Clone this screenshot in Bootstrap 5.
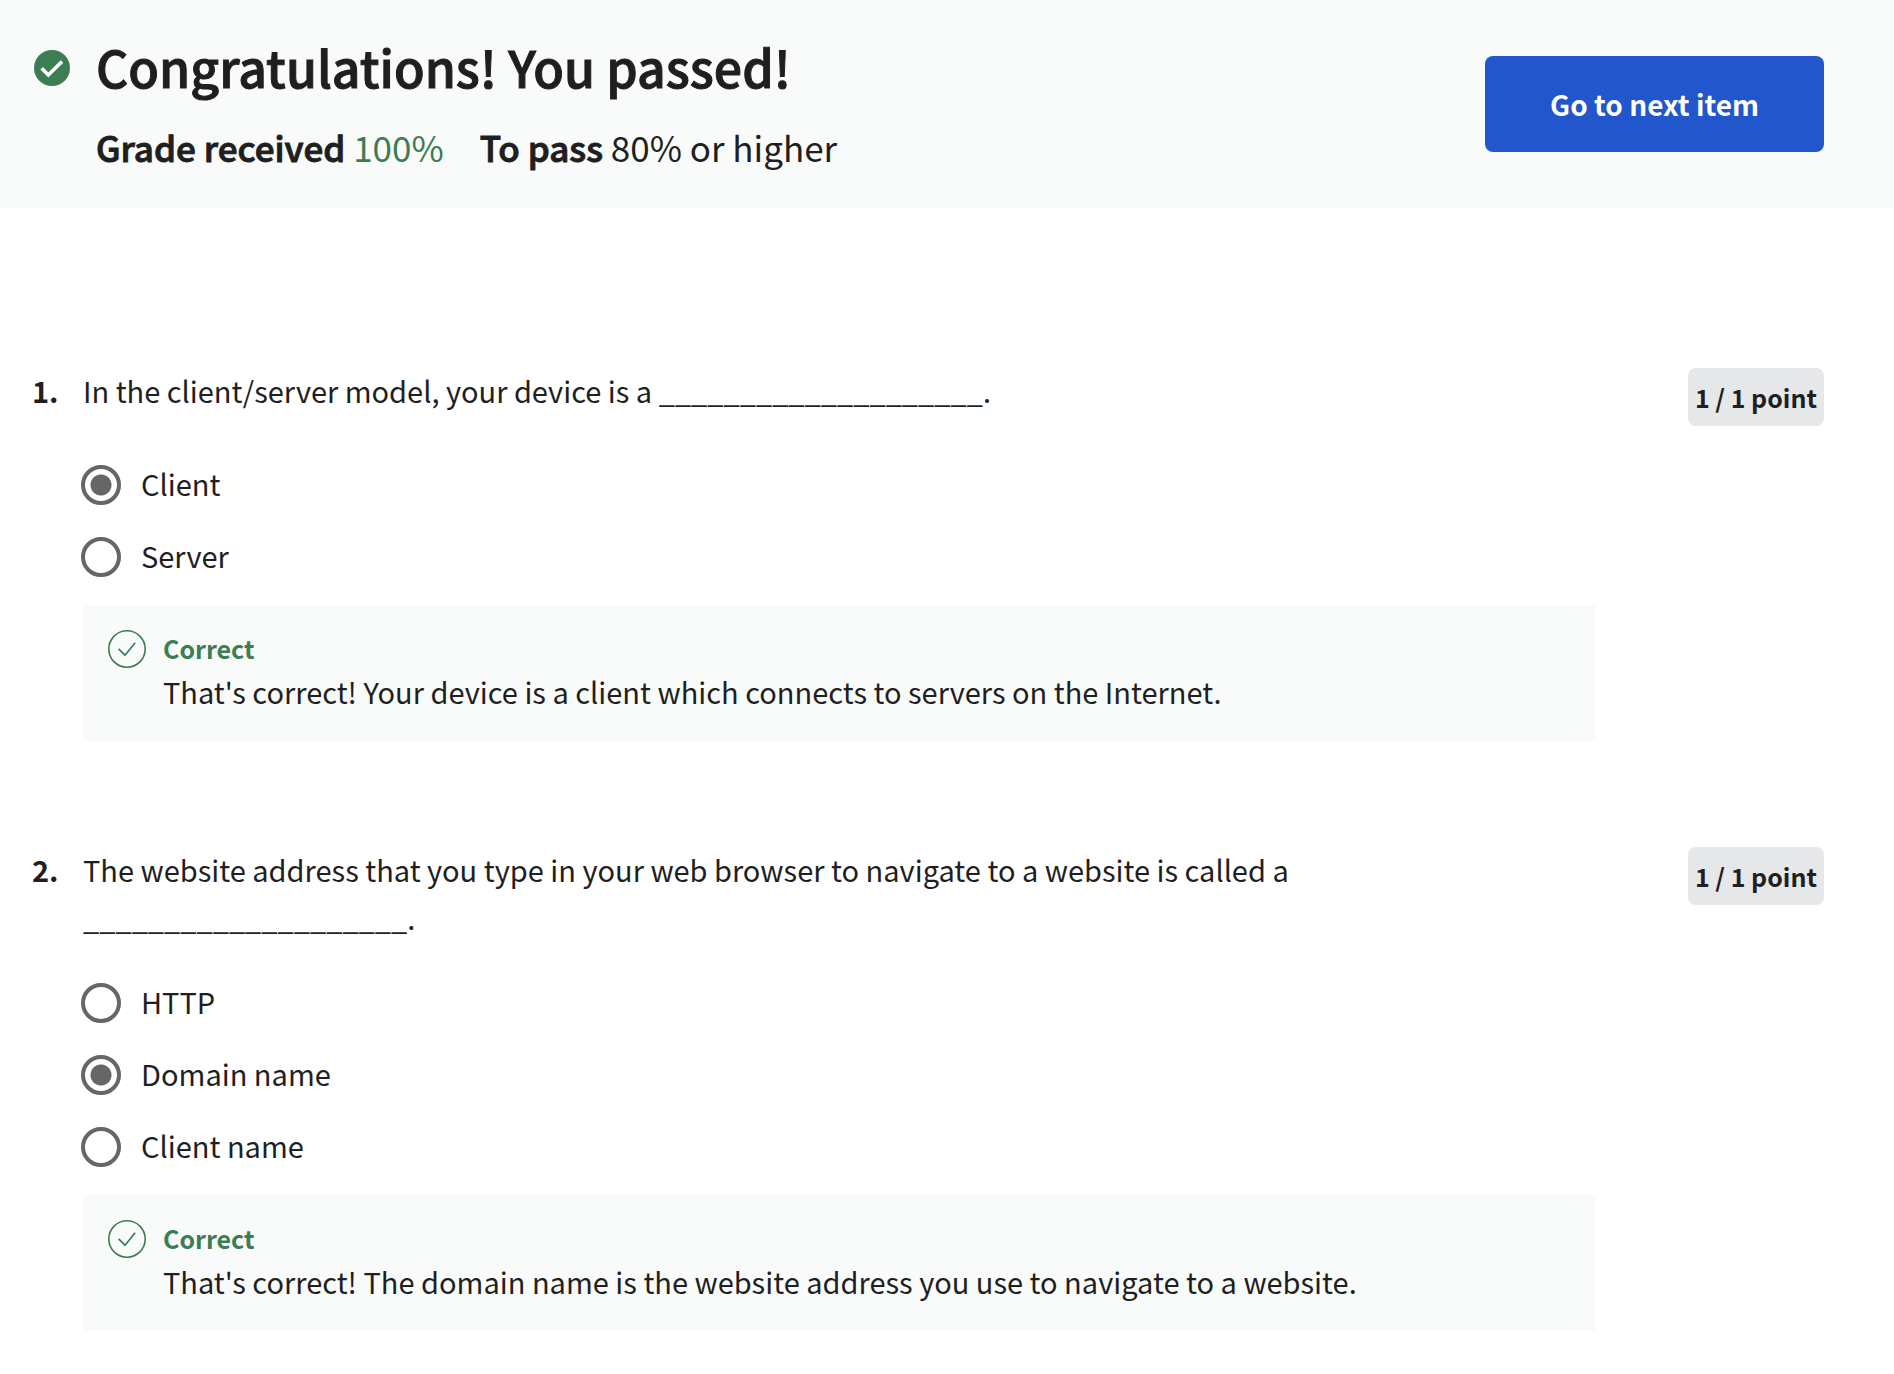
<!DOCTYPE html>
<html lang="en">
<head>
<meta charset="utf-8">
<meta name="viewport" content="width=device-width, initial-scale=1">
<title>Quiz results</title>
<link href="https://cdn.jsdelivr.net/npm/bootstrap@5.3.0/dist/css/bootstrap.min.css" rel="stylesheet">
<style>
:root { --ink: #1f1f1f; --pass: #3d7d54; --panel: #f9fbfa; --ring: #666; }
body { font-family: "Noto Sans CJK SC", "Noto Sans", sans-serif; font-size: 29px; line-height: 48px; color: var(--ink); }
.text-pass { color: var(--pass); }
.w-semi { font-weight: 500; -webkit-text-stroke: 1px var(--ink); }

.result-bar { background: var(--panel); padding: 36px 70px 36px 34px; column-gap: 26px; }
.result-icon { width: 36px; height: 36px; margin-top: 14px; }
.result-bar h1 { font-size: 50px; line-height: 60px; margin-bottom: 26px; }
.result-grade { font-size: 35px; line-height: 50px; column-gap: 36px; }
.btn-next { --bs-btn-bg: #2156cc; --bs-btn-color: #fff; --bs-btn-hover-bg: #1b47a8; --bs-btn-hover-color: #fff; --bs-btn-font-size: 28px; --bs-btn-font-weight: 700; --bs-btn-line-height: 40px; --bs-btn-border-width: 0; --bs-btn-border-radius: 8px; --bs-btn-padding-x: 65px; --bs-btn-padding-y: 28px; }

.quiz { padding: 158px 70px 43px 32px; }
.question + .question { margin-top: 104px; }
.q-num { width: 51px; font-weight: 700; }
.q-prompt { min-height: 57px; margin-bottom: 26px; }
.q-points { background: #e5e7e8; border-radius: 8px; font-size: 25px; font-weight: 700; line-height: 58px; padding: 0 7px; margin: 2px 0 0 93px; }

.q-option { height: 72px; column-gap: 20px; margin-left: -2px; }
.q-option label { padding-bottom: 4px; }
.q-option .form-check-input { width: 40px; height: 40px; margin: 0; border: 4px solid var(--ring); background: #fff; }
.q-option .form-check-input:checked { background: radial-gradient(circle, var(--ring) 10px, #fff 11px); }
.q-option .form-check-input:focus { box-shadow: 0 0 0 4px #2156cc40; }

.feedback { background: var(--panel); padding: 25px 25px 26px; margin-top: 12px; column-gap: 17px; }
.feedback svg { width: 38px; height: 38px; }
.feedback-title { font-size: 25px; line-height: 37px; font-weight: 700; margin: 0; }
</style>
</head>
<body>
<header class="result-bar d-flex align-items-center">
  <svg class="result-icon flex-shrink-0 align-self-start" viewBox="0 0 36 36" aria-hidden="true">
    <circle cx="18" cy="18" r="18" fill="#3d7d54"/>
    <path d="M7.7 18.3 L14.4 25 L28 11.4" fill="none" stroke="#fff" stroke-width="3.6"/>
  </svg>
  <div>
    <h1 class="w-semi">Congratulations! You passed!</h1>
    <div class="result-grade d-flex flex-wrap">
      <span><span class="w-semi">Grade received</span> <span class="text-pass">100%</span></span>
      <span><span class="w-semi">To pass</span> 80% or higher</span>
    </div>
  </div>
  <button type="button" class="btn btn-next ms-auto text-nowrap">Go to next item</button>
</header>

<main class="quiz">
  <section class="question d-flex align-items-start">
    <div class="q-num flex-shrink-0">1.</div>
    <div class="flex-grow-1">
      <div class="q-prompt" id="q1">In the client/server model, your device is a ____________________.</div>
      <div role="radiogroup" aria-labelledby="q1">
        <div class="q-option d-flex align-items-center">
          <input class="form-check-input flex-shrink-0" type="radio" name="q1" id="q1a" checked>
          <label for="q1a">Client</label>
        </div>
        <div class="q-option d-flex align-items-center">
          <input class="form-check-input flex-shrink-0" type="radio" name="q1" id="q1b">
          <label for="q1b">Server</label>
        </div>
      </div>
      <div class="feedback d-flex align-items-start">
        <svg class="flex-shrink-0" viewBox="0 0 38 38" fill="none" stroke="#3d7d54" aria-hidden="true">
          <circle cx="19" cy="19" r="18.2" stroke-width="1.6"/>
          <path d="M10.6 18.8 L17 25.2 L27.2 12.8" stroke-width="1.7"/>
        </svg>
        <div>
          <h2 class="feedback-title text-pass">Correct</h2>
          <div>That's correct! Your device is a client which connects to servers on the Internet.</div>
        </div>
      </div>
    </div>
    <div class="q-points flex-shrink-0">1 / 1 point</div>
  </section>

  <section class="question d-flex align-items-start">
    <div class="q-num flex-shrink-0">2.</div>
    <div class="flex-grow-1">
      <div class="q-prompt" id="q2">The website address that you type in your web browser to navigate to a website is called a ____________________.</div>
      <div role="radiogroup" aria-labelledby="q2">
        <div class="q-option d-flex align-items-center">
          <input class="form-check-input flex-shrink-0" type="radio" name="q2" id="q2a">
          <label for="q2a">HTTP</label>
        </div>
        <div class="q-option d-flex align-items-center">
          <input class="form-check-input flex-shrink-0" type="radio" name="q2" id="q2b" checked>
          <label for="q2b">Domain name</label>
        </div>
        <div class="q-option d-flex align-items-center">
          <input class="form-check-input flex-shrink-0" type="radio" name="q2" id="q2c">
          <label for="q2c">Client name</label>
        </div>
      </div>
      <div class="feedback d-flex align-items-start">
        <svg class="flex-shrink-0" viewBox="0 0 38 38" fill="none" stroke="#3d7d54" aria-hidden="true">
          <circle cx="19" cy="19" r="18.2" stroke-width="1.6"/>
          <path d="M10.6 18.8 L17 25.2 L27.2 12.8" stroke-width="1.7"/>
        </svg>
        <div>
          <h2 class="feedback-title text-pass">Correct</h2>
          <div>That's correct! The domain name is the website address you use to navigate to a website.</div>
        </div>
      </div>
    </div>
    <div class="q-points flex-shrink-0">1 / 1 point</div>
  </section>
</main>
<script src="https://cdn.jsdelivr.net/npm/bootstrap@5.3.0/dist/js/bootstrap.bundle.min.js"></script>
</body>
</html>
